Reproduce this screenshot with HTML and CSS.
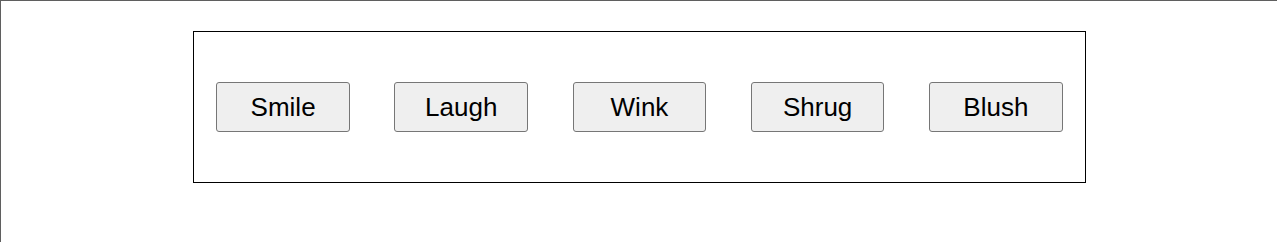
FILE: index.html
```html
<!DOCTYPE html>
<html>
<head>
<meta charset="utf-8">
<link rel="stylesheet" href="styles.css">
</head>
<body>
<div class="page">
  <div class="panel">
    <button class="btn">Smile</button>
    <button class="btn">Laugh</button>
    <button class="btn">Wink</button>
    <button class="btn">Shrug</button>
    <button class="btn">Blush</button>
  </div>
</div>
</body>
</html>
```

FILE: styles.css
```css
html, body {
  margin: 0;
  padding: 0;
  background: #fff;
}
.page {
  border-top: 1px solid #5f5f5f;
  border-left: 1px solid #5f5f5f;
  height: 242px;
  box-sizing: border-box;
  padding: 30px 0 0 192px;
  font-family: "Liberation Sans", Arial, sans-serif;
}
.panel {
  width: 891px;
  height: 150px;
  border: 1px solid #000;
  display: flex;
  justify-content: space-around;
  align-items: center;
}
.btn {
  width: 15%;
  height: 50px;
  font-family: "Liberation Sans", Arial, sans-serif;
  font-size: 26px;
  color: #000;
  background: #efefef;
  border: 1px solid #767676;
  border-radius: 3px;
  padding: 0;
}
```
